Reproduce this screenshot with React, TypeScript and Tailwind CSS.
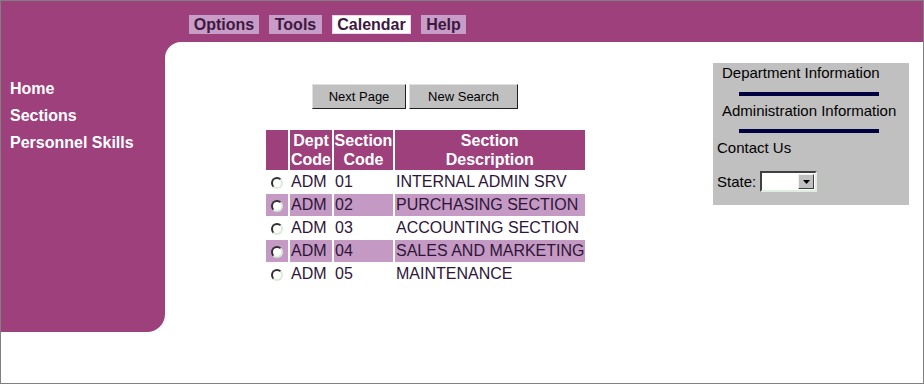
import React from 'react';

const menuItems = [
  { label: 'Options', width: 'w-[70px]' },
  { label: 'Tools', width: 'w-[53px]' },
  { label: 'Calendar', width: 'w-[79px]' },
  { label: 'Help', width: 'w-[45px]' }
];
const sideLinks = ['Home', 'Sections', 'Personnel Skills'];

const rows = [
  { dept: 'ADM', code: '01', desc: 'INTERNAL ADMIN SRV' },
  { dept: 'ADM', code: '02', desc: 'PURCHASING SECTION' },
  { dept: 'ADM', code: '03', desc: 'ACCOUNTING SECTION' },
  { dept: 'ADM', code: '04', desc: 'SALES AND MARKETING' },
  { dept: 'ADM', code: '05', desc: 'MAINTENANCE' }
];

const Radio: React.FC = () => (
  <span className="inline-block w-[12px] h-[12px] rounded-full bg-white border-2 border-t-[#303030] border-l-[#303030] border-r-[#d8ecd8] border-b-[#d8ecd8] align-middle" />
);

const Button: React.FC<{ label: string; width: string }> = ({ label, width }) => (
  <button
    type="button"
    className={`${width} h-[25px] bg-[#c0c0c0] text-[13px] text-black border border-t-[#e0e0e0] border-l-[#e0e0e0] border-r-[#202020] border-b-[#202020] leading-none`}
  >
    {label}
  </button>
);

const App: React.FC = () => {
  return (
    <div
      className="w-[924px] h-[384px] bg-white border border-[#808080] overflow-hidden flex flex-col"
      style={{ fontFamily: '"Liberation Sans", Arial, sans-serif' }}
    >
      {/* top bar */}
      <div className="h-[41px] shrink-0 bg-[#9e407c] flex items-start pl-[188px] pt-[14px] gap-[10px]">
        {menuItems.map(item => (
          <span
            key={item.label}
            className={`${item.width} h-[19px] text-center text-[16px] font-bold text-[#3e1840] ${
              item.label === 'Calendar'
                ? 'bg-white border border-[#e8d8e8] leading-[17px]'
                : 'bg-[#c79cc7] leading-[19px]'
            }`}
          >
            {item.label}
          </span>
        ))}
      </div>

      <div className="flex flex-1 items-start">
        {/* sidebar */}
        <div className="w-[164px] h-[290px] shrink-0 bg-[#9e407c] rounded-br-[18px] pl-[9px] pt-[37px] flex flex-col gap-[8px]">
          {sideLinks.map(link => (
            <a key={link} className="text-white font-bold text-[16px] leading-[19px] cursor-pointer">
              {link}
            </a>
          ))}
        </div>

        {/* main */}
        <div className="flex-1 self-stretch bg-[#9e407c]">
          <div className="h-full bg-white rounded-tl-[16px] flex">
            <div className="w-[548px] shrink-0 pt-[42px]">
              <div className="flex gap-[3px] ml-[147px]">
                <Button label="Next Page" width="w-[94px]" />
                <Button label="New Search" width="w-[109px]" />
              </div>

              <table className="ml-[99px] mt-[20px] border-separate border-spacing-x-[2px] border-spacing-y-[1px] text-[16px]">
                <thead>
                  <tr className="text-white font-bold leading-[19px]">
                    <th className="w-[22px] bg-[#9e407c] h-[40px]" />
                    <th className="w-[42px] bg-[#9e407c] font-bold">Dept<br />Code</th>
                    <th className="w-[59px] bg-[#9e407c] font-bold">Section<br />Code</th>
                    <th className="w-[187px] bg-[#9e407c] font-bold">Section<br />Description</th>
                  </tr>
                </thead>
                <tbody className="text-[#2e1538]">
                  {rows.map((row, i) => {
                    const bg = i % 2 === 1 ? 'bg-[#c49ac4]' : '';
                    return (
                      <tr key={row.code} className="h-[22px] leading-[20px]">
                        <td className={`${bg} text-center pt-[1px]`}>
                          <Radio />
                        </td>
                        <td className={`${bg} pl-[1px]`}>{row.dept}</td>
                        <td className={`${bg} pl-[1px]`}>{row.code}</td>
                        <td className={`${bg} pl-[1px] whitespace-nowrap`}>{row.desc}</td>
                      </tr>
                    );
                  })}
                </tbody>
              </table>
            </div>

            {/* right info panel */}
            <div className="w-[196px] h-[142px] mt-[21px] bg-[#c0c0c0] text-black text-[15px] leading-[17px] flex flex-col">
              <span className="pl-[9px] pt-[1px]">Department Information</span>
              <div className="h-[4px] w-[140px] bg-[#000040] mt-[11px] ml-[26px]" />
              <span className="pl-[9px] mt-[6px]">Administration Information</span>
              <div className="h-[4px] w-[140px] bg-[#000040] mt-[10px] ml-[26px]" />
              <span className="pl-[4px] mt-[6px]">Contact Us</span>
              <div className="flex items-center pl-[4px] mt-[15px] gap-[4px]">
                <span>State:</span>
                <div className="w-[57px] h-[21px] bg-white border-2 border-t-[#404040] border-l-[#404040] border-r-[#dfeedf] border-b-[#dfeedf] flex justify-end items-stretch p-[1px]">
                  <div className="w-[16px] bg-[#c0c0c0] border border-t-[#f0f0f0] border-l-[#f0f0f0] border-r-[#404040] border-b-[#404040] flex items-center justify-center">
                    <svg width="7" height="4" viewBox="0 0 7 4">
                      <path d="M0 0h7L3.5 4z" fill="#000" />
                    </svg>
                  </div>
                </div>
              </div>
            </div>
          </div>
        </div>
      </div>
    </div>
  );
};

export default App;
